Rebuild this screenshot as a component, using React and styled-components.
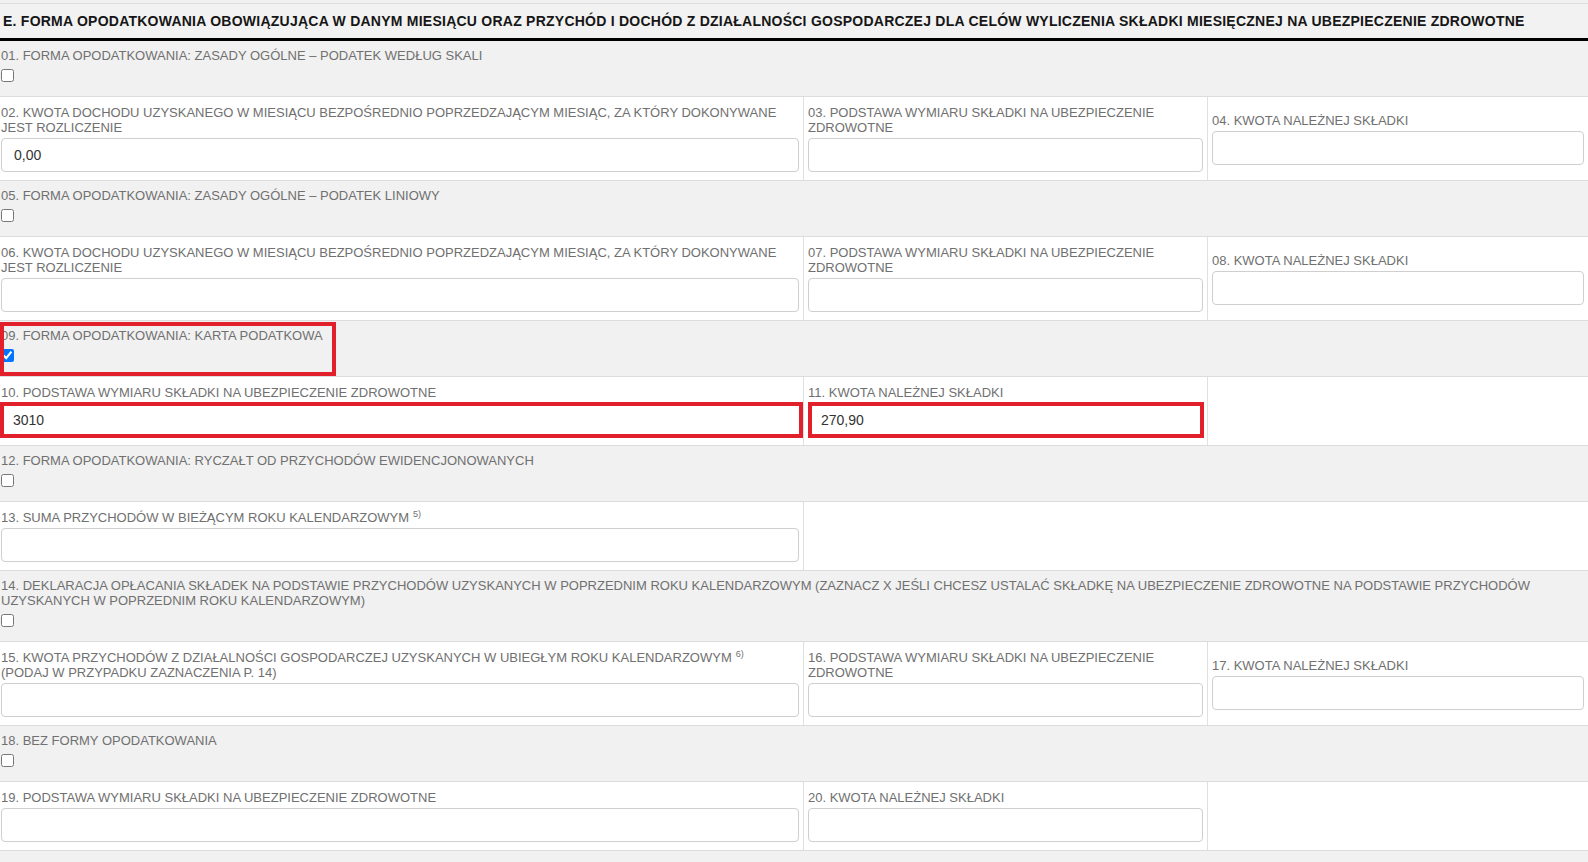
import React from "react";
import styled, { createGlobalStyle } from "styled-components";

const Global = createGlobalStyle`
  html, body { margin: 0; padding: 0; background: #ffffff; }
  body { font-family: "Liberation Sans", Arial, sans-serif; }
  * { box-sizing: border-box; }
`;

const Page = styled.div`
  width: 1588px;
  min-height: 862px;
  background: #f1f1f1;
  padding-top: 3px;
  overflow: hidden;
`;

const Header = styled.div`
  height: 38px;
  border-top: 1px solid #dedede;
  border-bottom: 3px solid #000;
  background: #f2f2f2;
  padding-left: 3px;
  font-weight: bold;
  font-size: 14px;
  letter-spacing: 0.24px;
  line-height: 34px;
  color: #161616;
  white-space: nowrap;
`;

const Row = styled.div`
  position: relative;
  display: grid;
  grid-template-columns: ${(p) => (p.$single ? "1fr" : "803px 404px 381px")};
  background: ${(p) => (p.$gray ? "#f1f1f1" : "#ffffff")};
  border-bottom: 1px solid #dcdcdc;
`;

const Cell = styled.div`
  display: flex;
  flex-direction: column;
  justify-content: ${(p) => (p.$center ? "center" : "flex-start")};
  padding: ${(p) => (p.$check ? "7px 4px 14px 1px" : p.$first ? "8px 4px 8px 1px" : "8px 4px 8px 4px")};
  border-left: ${(p) => (p.$first ? "none" : "1px solid #e0e0e0")};
  grid-column: ${(p) => p.$span || "auto"};
`;

const Label = styled.div`
  font-size: 13px;
  line-height: 15px;
  color: #707070;
  margin-bottom: 3px;
`;

const Sup = styled.sup`
  font-size: 9px;
  line-height: 0;
  vertical-align: 5px;
  margin-left: 4px;
`;

const Field = styled.input`
  display: block;
  width: ${(p) => (p.$highlight && p.$first ? "calc(100% + 5px)" : p.$highlight ? "calc(100% + 1px)" : "100%")};
  height: ${(p) => (p.$highlight ? "36px" : "34px")};
  margin: ${(p) => (p.$highlight ? (p.$first ? "-1px 0 -1px -1px" : "-1px 0 -1px 0") : "0")};
  padding: 0 ${(p) => (p.$highlight ? "9px" : "12px")};
  border: ${(p) => (p.$highlight ? "4px solid #e2202b" : "1px solid #cfcfcf")};
  border-radius: ${(p) => (p.$highlight ? "0" : "4px")};
  background: #fff;
  font-family: "Liberation Sans", Arial, sans-serif;
  font-size: 14px;
  color: #333;
  outline: none;
`;

const Check = styled.input.attrs({ type: "checkbox" })`
  display: block;
  width: 13px;
  height: 13px;
  margin: 3px 0 0 0;
`;

const Highlight = styled.div`
  position: absolute;
  left: 0;
  top: 1px;
  width: 336px;
  height: 54px;
  border: 4px solid #e2202b;
  pointer-events: none;
`;

const CheckRow = ({ label, checked, boxed }) => (
  <Row $single $gray>
    <Cell $first $check>
      <Label>{label}</Label>
      <Check defaultChecked={checked} />
    </Cell>
    {boxed && <Highlight />}
  </Row>
);

const FieldCell = ({ label, value, first, center, highlight }) => (
  <Cell $first={first} $center={center}>
    <Label>{label}</Label>
    <Field defaultValue={value || ""} $highlight={highlight} $first={first} />
  </Cell>
);

export default function App() {
  return (
    <>
      <Global />
      <Page>
        <Header>
          E. FORMA OPODATKOWANIA OBOWIĄZUJĄCA W DANYM MIESIĄCU ORAZ PRZYCHÓD I DOCHÓD Z DZIAŁALNOŚCI GOSPODARCZEJ DLA CELÓW WYLICZENIA SKŁADKI MIESIĘCZNEJ NA UBEZPIECZENIE ZDROWOTNE
        </Header>

        <CheckRow label="01. FORMA OPODATKOWANIA: ZASADY OGÓLNE – PODATEK WEDŁUG SKALI" />
        <Row>
          <FieldCell first label="02. KWOTA DOCHODU UZYSKANEGO W MIESIĄCU BEZPOŚREDNIO POPRZEDZAJĄCYM MIESIĄC, ZA KTÓRY DOKONYWANE JEST ROZLICZENIE" value="0,00" />
          <FieldCell label="03. PODSTAWA WYMIARU SKŁADKI NA UBEZPIECZENIE ZDROWOTNE" />
          <FieldCell center label="04. KWOTA NALEŻNEJ SKŁADKI" />
        </Row>

        <CheckRow label="05. FORMA OPODATKOWANIA: ZASADY OGÓLNE – PODATEK LINIOWY" />
        <Row>
          <FieldCell first label="06. KWOTA DOCHODU UZYSKANEGO W MIESIĄCU BEZPOŚREDNIO POPRZEDZAJĄCYM MIESIĄC, ZA KTÓRY DOKONYWANE JEST ROZLICZENIE" />
          <FieldCell label="07. PODSTAWA WYMIARU SKŁADKI NA UBEZPIECZENIE ZDROWOTNE" />
          <FieldCell center label="08. KWOTA NALEŻNEJ SKŁADKI" />
        </Row>

        <CheckRow label="09. FORMA OPODATKOWANIA: KARTA PODATKOWA" checked boxed />
        <Row>
          <FieldCell first highlight label="10. PODSTAWA WYMIARU SKŁADKI NA UBEZPIECZENIE ZDROWOTNE" value="3010" />
          <FieldCell highlight label="11. KWOTA NALEŻNEJ SKŁADKI" value="270,90" />
          <Cell />
        </Row>

        <CheckRow label="12. FORMA OPODATKOWANIA: RYCZAŁT OD PRZYCHODÓW EWIDENCJONOWANYCH" />
        <Row>
          <FieldCell
            first
            label={
              <>
                13. SUMA PRZYCHODÓW W BIEŻĄCYM ROKU KALENDARZOWYM<Sup>5)</Sup>
              </>
            }
          />
          <Cell $span="2 / 4" />
        </Row>

        <CheckRow label="14. DEKLARACJA OPŁACANIA SKŁADEK NA PODSTAWIE PRZYCHODÓW UZYSKANYCH W POPRZEDNIM ROKU KALENDARZOWYM (ZAZNACZ X JEŚLI CHCESZ USTALAĆ SKŁADKĘ NA UBEZPIECZENIE ZDROWOTNE NA PODSTAWIE PRZYCHODÓW UZYSKANYCH W POPRZEDNIM ROKU KALENDARZOWYM)" />
        <Row>
          <FieldCell
            first
            label={
              <>
                15. KWOTA PRZYCHODÓW Z DZIAŁALNOŚCI GOSPODARCZEJ UZYSKANYCH W UBIEGŁYM ROKU KALENDARZOWYM<Sup>6)</Sup>
                <br />
                (PODAJ W PRZYPADKU ZAZNACZENIA P. 14)
              </>
            }
          />
          <FieldCell label="16. PODSTAWA WYMIARU SKŁADKI NA UBEZPIECZENIE ZDROWOTNE" />
          <FieldCell center label="17. KWOTA NALEŻNEJ SKŁADKI" />
        </Row>

        <CheckRow label="18. BEZ FORMY OPODATKOWANIA" />
        <Row>
          <FieldCell first label="19. PODSTAWA WYMIARU SKŁADKI NA UBEZPIECZENIE ZDROWOTNE" />
          <FieldCell label="20. KWOTA NALEŻNEJ SKŁADKI" />
          <Cell />
        </Row>
      </Page>
    </>
  );
}
